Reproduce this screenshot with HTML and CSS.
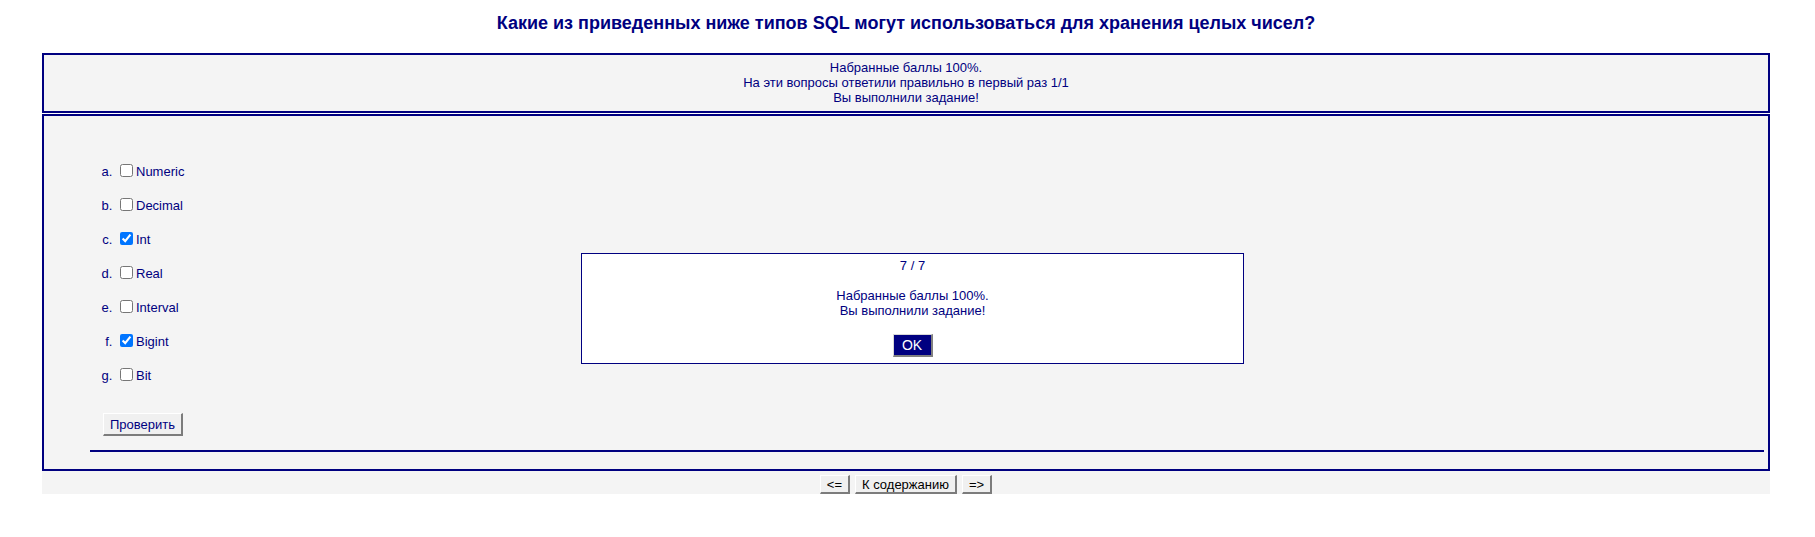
FILE: index.html
```html
<!DOCTYPE html>
<html lang="ru">
<head>
<meta charset="utf-8">
<title>Тест SQL</title>
<link rel="stylesheet" href="styles.css">
</head>
<body>
<div class="page">
  <h1 class="title">Какие из приведенных ниже типов SQL могут использоваться для хранения целых чисел?</h1>

  <div class="box summary">
    <div>Набранные баллы 100%.</div>
    <div>На эти вопросы ответили правильно в первый раз 1/1</div>
    <div>Вы выполнили задание!</div>
  </div>

  <div class="box question">
    <ol class="answers" type="a">
      <li><label><input type="checkbox">Numeric</label></li>
      <li><label><input type="checkbox">Decimal</label></li>
      <li><label><input type="checkbox" checked>Int</label></li>
      <li><label><input type="checkbox">Real</label></li>
      <li><label><input type="checkbox">Interval</label></li>
      <li><label><input type="checkbox" checked>Bigint</label></li>
      <li><label><input type="checkbox">Bit</label></li>
    </ol>
    <button class="btn check-btn" type="button">Проверить</button>
    <hr class="rule">

    <div class="modal">
      <p class="modal-count">7 / 7</p>
      <p class="modal-msg">Набранные баллы 100%.<br>Вы выполнили задание!</p>
      <button class="ok-btn" type="button">OK</button>
    </div>
  </div>

  <div class="nav">
    <button class="btn nav-btn" type="button">&lt;=</button>
    <button class="btn nav-btn" type="button">К содержанию</button>
    <button class="btn nav-btn" type="button">=&gt;</button>
  </div>
</div>
</body>
</html>
```

FILE: styles.css
```css
html, body {
  margin: 0;
  padding: 0;
  background: #ffffff;
}

body {
  font-family: "Liberation Sans", Arial, sans-serif;
  font-size: 13px;
  color: #000080;
}

.page {
  margin: 0 45px 0 42px;
}

.title {
  margin: 0 0 19px;
  padding-top: 12px;
  font-size: 18px;
  line-height: 22px;
  font-weight: bold;
  text-align: center;
  color: #000080;
}

.box {
  background: #f4f4f4;
  border: 2px solid #000080;
}

.summary {
  padding: 5px 0 6px;
  line-height: 15px;
  text-align: center;
}

.question {
  position: relative;
  margin-top: 1px;
  padding: 39px 0 17px;
}

.answers {
  margin: 0;
  padding-left: 72px;
  list-style-type: lower-alpha;
}

.answers li {
  height: 34px;
  line-height: 34px;
}

.answers label {
  color: #000080;
}

.answers input {
  margin: 0 3px 0 4px;
  width: 13px;
  height: 13px;
  vertical-align: -1px;
}

.btn {
  font-family: "Liberation Sans", Arial, sans-serif;
  font-size: 13px;
  background: #f0f0f0;
  border-style: solid;
  border-width: 1px 2px 2px 1px;
  border-color: #ffffff #7c7c7c #7c7c7c #ffffff;
  border-radius: 0;
  margin: 0;
  cursor: pointer;
}

.check-btn {
  display: block;
  margin: 20px 0 0 59px;
  height: 23px;
  width: 80px;
  padding: 0;
  color: #000080;
}

.rule {
  margin: 14px 4px 0 46px;
  height: 0;
  border: 0;
  border-top: 2px solid #000080;
}

.modal {
  position: absolute;
  left: 537px;
  top: 137px;
  width: 661px;
  height: 109px;
  background: #ffffff;
  border: 1px solid #000080;
  text-align: center;
  line-height: 15px;
}

.modal p {
  margin: 0;
}

.modal-count {
  padding-top: 4px;
  margin-bottom: 15px !important;
}

.ok-btn {
  margin-top: 16px;
  width: 40px;
  height: 23px;
  padding: 0;
  font-family: "Liberation Sans", Arial, sans-serif;
  font-size: 14px;
  color: #ffffff;
  background: #000080;
  border-style: solid;
  border-width: 1px 2px 2px 1px;
  border-color: #d8d8d8 #808080 #808080 #d8d8d8;
  border-radius: 0;
}

.nav {
  background: #f4f4f4;
  display: flex;
  justify-content: center;
  gap: 5px;
  padding-top: 4px;
  height: 19px;
}

.nav-btn {
  height: 19px;
  padding: 0 6px;
  color: #000000;
  line-height: 15px;
}
```
